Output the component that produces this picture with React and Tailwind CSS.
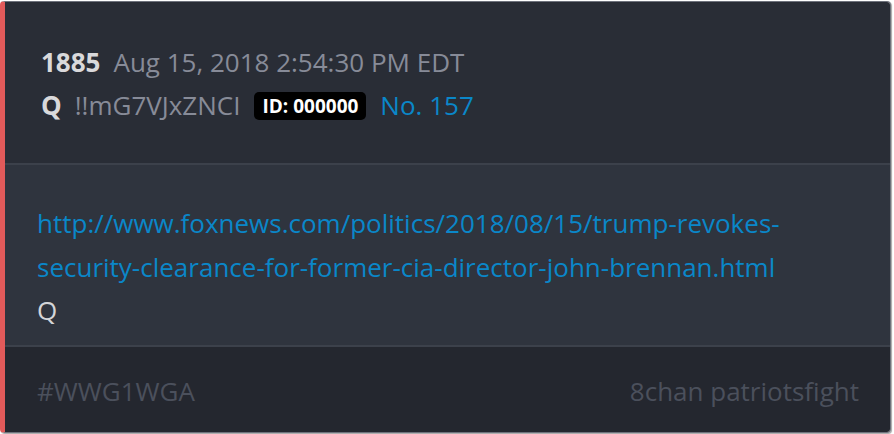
export default function App() {
  return (
    <div className="bg-white w-[894px] h-[434px] pt-px pr-[3px] pb-px" style={{ fontFamily: '"Open Sans", "Noto Sans", sans-serif' }}>
      <div className="h-full flex flex-col overflow-hidden rounded-[4px] border border-[#6e727c] border-l-[5px] border-l-[#e25a5a] shadow-[1px_1px_1px_rgba(0,0,0,0.35)]">
        <Header />
        <div className="h-[2px] bg-[#3c414b]" />
        <div className="bg-[#2f343e] pl-[32px] pr-[30px] pt-[36px] pb-[13px] text-[26px] leading-[44px]">
          <a className="text-[#0a87c9] break-words">
            http://www.foxnews.com/politics/2018/08/15/trump-revokes-security-clearance-for-former-cia-director-john-brennan.html
          </a>
          <div className="text-[#d4d5d8] leading-[43px]">Q</div>
        </div>
        <div className="h-[2px] bg-[#3c414b]" />
        <div className="flex-1 bg-[#24272f] pl-[32px] pr-[31px] pt-[22px] flex justify-between text-[26px] leading-[44px] text-[#4b505c]">
          <span>#WWG1WGA</span>
          <span>8chan patriotsfight</span>
        </div>
      </div>
    </div>
  );
}

function Header() {
  return (
    <div className="bg-[#292d36] pl-[36px] pt-[39px] pb-[36px] text-[26px] leading-[43px]">
      <div className="flex items-baseline">
        <span className="font-bold text-[#d9d9db]">1885</span>
        <span className="ml-[13px] text-[#878b98]">Aug 15, 2018 2:54:30 PM EDT</span>
      </div>
      <div className="flex items-baseline">
        <span className="font-bold text-[#d9d9db]">Q</span>
        <span className="ml-[13px] text-[#878b98]">!!mG7VJxZNCI</span>
        <span className="ml-[14px] self-center bg-black text-white font-bold text-[19px] leading-[28px] px-[8px] rounded-[5px]">
          ID: 000000
        </span>
        <span className="ml-[14px] text-[#0a87c9]">No. 157</span>
      </div>
    </div>
  );
}
